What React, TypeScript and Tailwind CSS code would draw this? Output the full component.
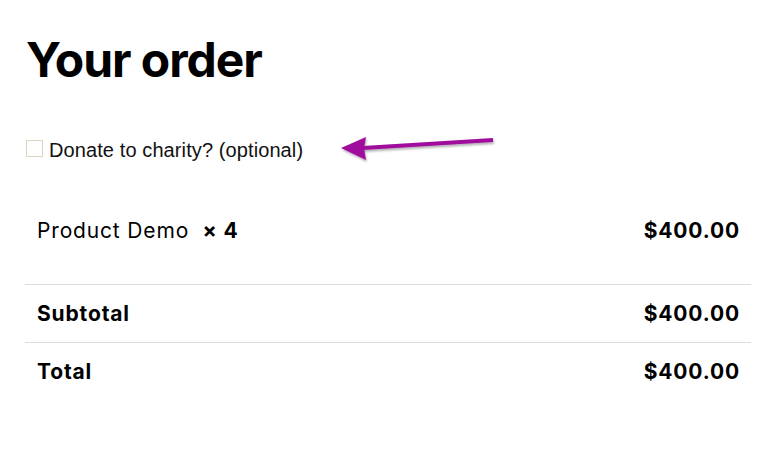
export default function App() {
  return (
    <div className="relative min-h-[451px] w-[778px] bg-white text-black">
      <div className="flex flex-col pl-[25px] pt-[36px]">
        {/* Heading */}
        <h1 className="pl-[1px] font-['Inter',sans-serif] text-[48px] font-bold leading-none tracking-[-0.022em]">
          Your order
        </h1>

        {/* Donation checkbox */}
        <label className="mt-[56px] flex items-start gap-[6px] pl-[1px]">
          <span className="h-[17px] w-[17px] shrink-0 border border-[#ddd4c2] bg-white" />
          <span className="mt-[-1px] font-['Liberation_Sans',Arial,sans-serif] text-[20px] leading-[22px] tracking-[0.005em] text-[#111]">
            Donate to charity? (optional)
          </span>
        </label>

        {/* Order table */}
        <div className="mt-[40px] w-[726px] font-['Inter',sans-serif] text-[21px] leading-[28px] tracking-[0.04em]">
          <div className="flex items-start justify-between px-[12px] pb-[39px] pt-[16px]">
            <span>
              Product Demo&nbsp;&nbsp;<strong className="font-bold">× 4</strong>
            </span>
            <span className="mr-[-1px] font-bold">$400.00</span>
          </div>
          <div className="flex justify-between border-t border-[#dcdcdc] px-[12px] pb-[14px] pt-[15px] font-bold">
            <span>Subtotal</span>
            <span className="mr-[-1px]">$400.00</span>
          </div>
          <div className="flex justify-between border-t border-[#dcdcdc] px-[12px] pb-[14px] pt-[15px] font-bold">
            <span>Total</span>
            <span className="mr-[-1px]">$400.00</span>
          </div>
        </div>
      </div>

      {/* Annotation arrow */}
      <svg
        className="pointer-events-none absolute left-[330px] top-[125px]"
        width="175"
        height="45"
        viewBox="0 0 175 45"
      >
        <defs>
          <filter id="sh" x="-10%" y="-30%" width="120%" height="160%">
            <feDropShadow dx="1" dy="2" stdDeviation="1.2" floodColor="#000" floodOpacity="0.3" />
          </filter>
        </defs>
        <g filter="url(#sh)" fill="#a00a9c">
          <polygon points="163,13 163,17 33,25 33,21" />
          <polygon points="11,23 36,12 34,23 36,35" />
        </g>
      </svg>
    </div>
  );
}
